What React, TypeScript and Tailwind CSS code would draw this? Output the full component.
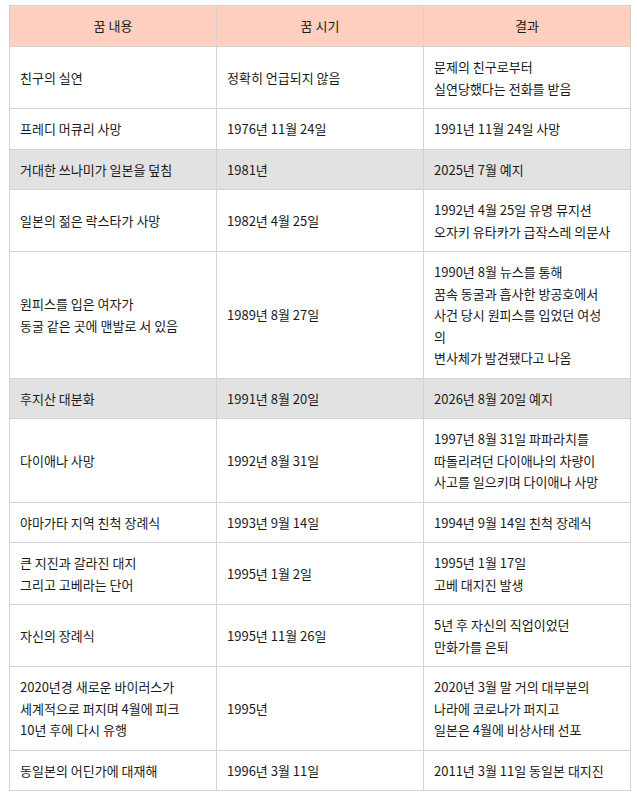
const rows: { dream: string[]; when: string; result: string[]; grey?: boolean }[] = [
  { dream: ['친구의 실연'], when: '정확히 언급되지 않음', result: ['문제의 친구로부터', '실연당했다는 전화를 받음'] },
  { dream: ['프레디 머큐리 사망'], when: '1976년 11월 24일', result: ['1991년 11월 24일 사망'] },
  { dream: ['거대한 쓰나미가 일본을 덮침'], when: '1981년', result: ['2025년 7월 예지'], grey: true },
  { dream: ['일본의 젊은 락스타가 사망'], when: '1982년 4월 25일', result: ['1992년 4월 25일 유명 뮤지션', '오자키 유타카가 급작스레 의문사'] },
  {
    dream: ['원피스를 입은 여자가', '동굴 같은 곳에 맨발로 서 있음'],
    when: '1989년 8월 27일',
    result: ['1990년 8월 뉴스를 통해', '꿈속 동굴과 흡사한 방공호에서', '사건 당시 원피스를 입었던 여성', '의', '변사체가 발견됐다고 나옴'],
  },
  { dream: ['후지산 대분화'], when: '1991년 8월 20일', result: ['2026년 8월 20일 예지'], grey: true },
  { dream: ['다이애나 사망'], when: '1992년 8월 31일', result: ['1997년 8월 31일 파파라치를', '따돌리려던 다이애나의 차량이', '사고를 일으키며 다이애나 사망'] },
  { dream: ['야마가타 지역 친척 장례식'], when: '1993년 9월 14일', result: ['1994년 9월 14일 친척 장례식'] },
  { dream: ['큰 지진과 갈라진 대지', '그리고 고베라는 단어'], when: '1995년 1월 2일', result: ['1995년 1월 17일', '고베 대지진 발생'] },
  { dream: ['자신의 장례식'], when: '1995년 11월 26일', result: ['5년 후 자신의 직업이었던', '만화가를 은퇴'] },
  {
    dream: ['2020년경 새로운 바이러스가', '세계적으로 퍼지며 4월에 피크', '10년 후에 다시 유행'],
    when: '1995년',
    result: ['2020년 3월 말 거의 대부분의', '나라에 코로나가 퍼지고', '일본은 4월에 비상사태 선포'],
  },
  { dream: ['동일본의 어딘가에 대재해'], when: '1996년 3월 11일', result: ['2011년 3월 11일 동일본 대지진'] },
]

function Lines({ lines }: { lines: string[] }) {
  return (
    <>
      {lines.map((l, i) => (
        <div key={i}>{l}</div>
      ))}
    </>
  )
}

export default function App() {
  return (
    <main className="min-h-screen bg-white pt-[5px] pl-[9px]" style={{ fontFamily: '"Noto Sans CJK KR", "Noto Sans", sans-serif' }}>
      <table className="w-[622px] table-fixed border-collapse text-[13px] leading-[21.5px] text-[#1a1a1a]">
        <thead>
          <tr className="bg-[#ffcfc0]">
            <th className="h-[41px] border border-[#d3d3d3] font-normal text-center">꿈 내용</th>
            <th className="h-[41px] border border-[#d3d3d3] font-normal text-center">꿈 시기</th>
            <th className="h-[41px] border border-[#d3d3d3] font-normal text-center">결과</th>
          </tr>
        </thead>
        <tbody>
          {rows.map((r, i) => (
            <tr key={i} className={r.grey ? 'bg-[#e2e2e2]' : 'bg-white'}>
              <td className="border border-[#d3d3d3] px-[10px] py-[9px] align-middle">
                <Lines lines={r.dream} />
              </td>
              <td className="border border-[#d3d3d3] px-[10px] py-[9px] align-middle">{r.when}</td>
              <td className="border border-[#d3d3d3] px-[10px] py-[9px] align-middle">
                <Lines lines={r.result} />
              </td>
            </tr>
          ))}
        </tbody>
      </table>
    </main>
  )
}
